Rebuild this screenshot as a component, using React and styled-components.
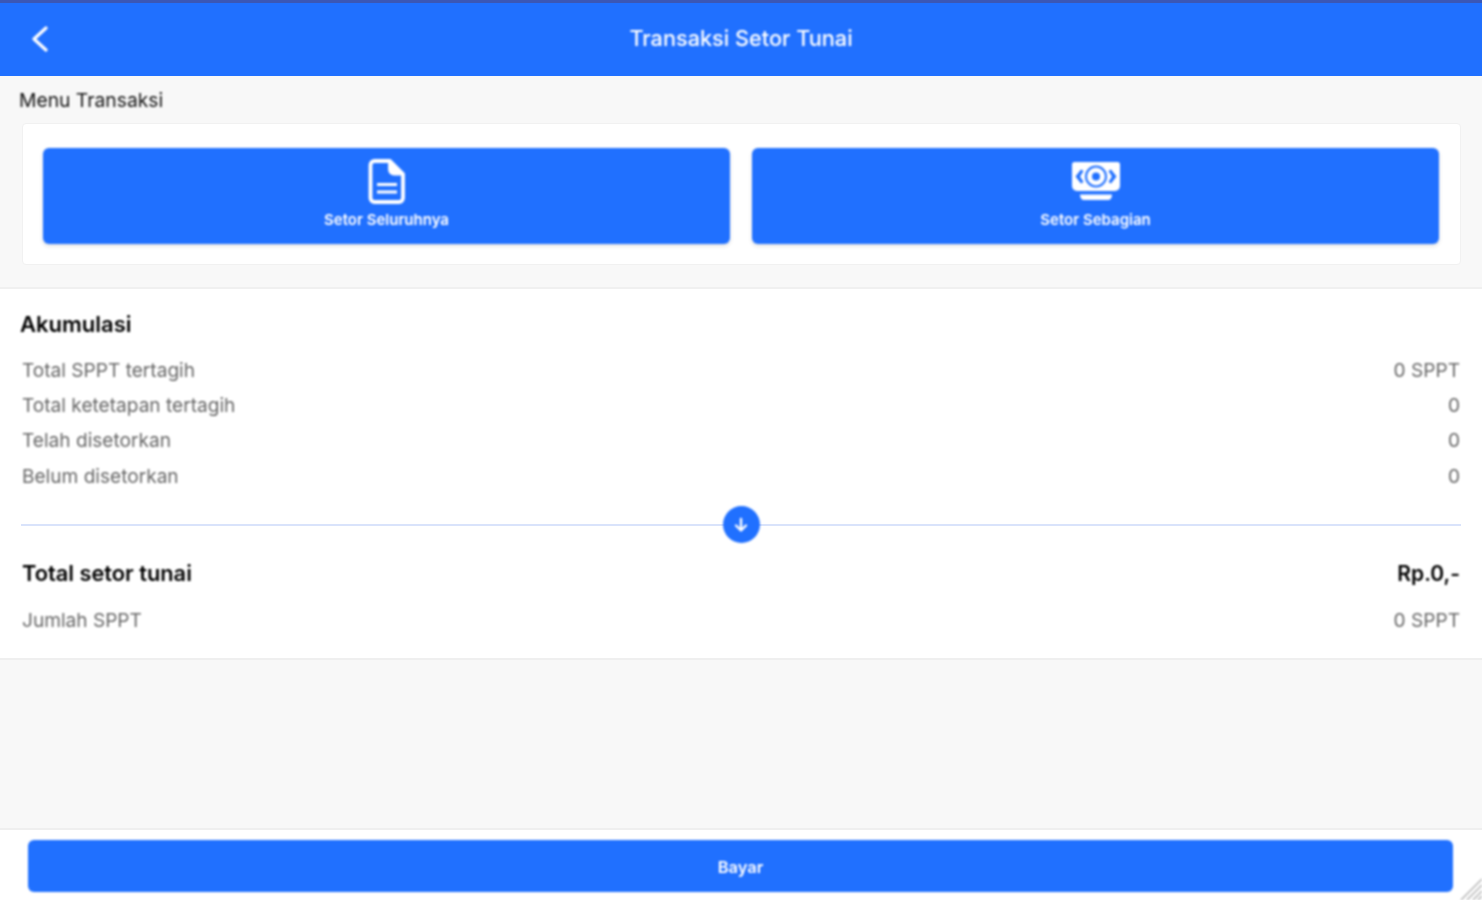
import React from "react";
import styled, { createGlobalStyle, css } from "styled-components";

const GlobalStyle = createGlobalStyle`
  html, body {
    margin: 0;
    padding: 0;
    background: #f8f8f8;
    font-family: Inter, "Noto Sans", sans-serif;
  }
  * { box-sizing: border-box; }
`;

// the reference is a scaled-up capture, so its text and buttons are a bit soft
const soft = css`
  filter: blur(0.8px);
`;

const Page = styled.div`
  position: relative;
  width: 1482px;
  height: 900px;
  overflow: hidden;
  display: flex;
  flex-direction: column;
  background: #f8f8f8;
`;

const Header = styled.header`
  height: 76px;
  flex: none;
  display: flex;
  align-items: center;
  justify-content: center;
  position: relative;
  background: #2070ff;
  border-top: 3px solid #3b57b5;
  color: #fff;
`;

const BackButton = styled.button`
  ${soft}
  position: absolute;
  left: 26px;
  top: 18px;
  width: 28px;
  height: 32px;
  padding: 0;
  border: 0;
  background: transparent;
  color: #fff;
`;

const Title = styled.h1`
  ${soft}
  margin: 0;
  font-size: 21.700px;
  font-weight: 500;
  line-height: 70px;
  align-self: flex-start;
`;

const MenuSection = styled.section`
  height: 213px;
  flex: none;
  padding: 12px 21px 0 22px;
  border-bottom: 2px solid #f0f0f0;
`;

const MenuLabel = styled.div`
  ${soft}
  margin-left: -3px;
  height: 35px;
  font-size: 19.300px;
  line-height: 24px;
  color: #111;
`;

const MenuCard = styled.div`
  height: 142px;
  padding: 24px 21px 24px 20px;
  display: grid;
  grid-template-columns: 1fr 1fr;
  gap: 22px;
  background: #fff;
  border: 1px solid #f1f1f1;
  border-radius: 4px;
`;

const MenuButton = styled.button`
  ${soft}
  height: 96px;
  padding: 11px 0 0;
  border: 0;
  border-radius: 6px;
  display: flex;
  flex-direction: column;
  align-items: center;
  background: #2070ff;
  color: #fff;
  font-family: inherit;
  font-size: 15px;
  font-weight: 600;
  box-shadow: 0 2px 4px rgba(0, 0, 0, 0.12);
`;

const MenuIcon = styled.svg`
  width: 50px;
  height: 46px;
  margin-bottom: 5px;
  display: block;
`;

const MenuText = styled.span`
  line-height: 20px;
`;

const Summary = styled.section`
  height: 371px;
  flex: none;
  padding: 20px 22px 0;
  background: #fff;
  border-bottom: 2px solid #efefef;
`;

const SummaryTitle = styled.h2`
  ${soft}
  margin: 0 0 13px -2px;
  font-size: 22px;
  line-height: 30px;
  font-weight: 600;
  color: #000;
`;

const Row = styled.div`
  ${soft}
  height: 35.300px;
  display: flex;
  align-items: center;
  justify-content: space-between;
  font-size: 19.100px;
  color: #666;
`;

const Divider = styled.div`
  position: relative;
  height: 2px;
  margin: 31px -1px 31px -1px;
  background: #d9e3fb;
`;

const ArrowBadge = styled.div`
  ${soft}
  position: absolute;
  left: 701.500px;
  top: -18px;
  width: 37px;
  height: 37px;
  display: flex;
  align-items: center;
  justify-content: center;
  border-radius: 50%;
  background: #2070ff;
  color: #fff;
`;

const TotalRow = styled.div`
  ${soft}
  height: 32px;
  margin-bottom: 13px;
  display: flex;
  align-items: center;
  justify-content: space-between;
  font-size: 21.800px;
  font-weight: 600;
  color: #000;
`;

const Amount = styled.span`
  font-size: 21px;
`;

const Spacer = styled.div`
  flex: 1;
`;

const Footer = styled.footer`
  height: 72px;
  flex: none;
  padding: 10px 29px 0 28px;
  background: #fff;
  border-top: 2px solid #efefef;
`;

const PayButton = styled.button`
  ${soft}
  width: 100%;
  height: 52px;
  padding: 2px 0 0;
  border: 0;
  border-radius: 6px;
  background: #2070ff;
  color: #fff;
  font-family: inherit;
  font-size: 16.500px;
  font-weight: 600;
`;

const ResizeGrip = styled.svg`
  ${soft}
  position: absolute;
  right: 0;
  bottom: 0;
  width: 22px;
  height: 22px;
`;

const rows = [
  ["Total SPPT tertagih", "0 SPPT"],
  ["Total ketetapan tertagih", "0"],
  ["Telah disetorkan", "0"],
  ["Belum disetorkan", "0"],
];

const DocumentIcon = () => (
  <MenuIcon viewBox="0 0 50 46" fill="none" stroke="currentColor" strokeWidth="3.800" strokeLinejoin="round">
    <path d="M8.500 6a4 4 0 0 1 4-4H28l13 13v24a4 4 0 0 1-4 4H12.500a4 4 0 0 1-4-4z" />
    <path d="M28 2.500v8a4 4 0 0 0 4 4h8.500" fill="currentColor" />
    <path d="M15 25.500h20M15 33h20" strokeWidth="3" />
  </MenuIcon>
);

const MoneyIcon = () => (
  <MenuIcon viewBox="0 0 50 46">
    <path
      fill="currentColor"
      fillRule="evenodd"
      d="M3.500 3h43A2.500 2.500 0 0 1 49 5.500V27a5 5 0 0 1-5 5H6a5 5 0 0 1-5-5V5.500A2.500 2.500 0 0 1 3.500 3zM10 10.500 4.500 17.500 10 24.500l2.500-1.500-3.500-5.500 3.500-5.500zM40 10.500l-2.500 1.500 3.500 5.500-3.500 5.500 2.500 1.500 5.500-7zM25 6.500a11 11 0 1 0 0 22 11 11 0 0 0 0-22z"
    />
    <path
      fill="currentColor"
      fillRule="evenodd"
      d="M25 8.500a9 9 0 1 1 0 18 9 9 0 0 1 0-18zm0 5a4 4 0 1 0 0 8 4 4 0 0 0 0-8z"
    />
    <path fill="currentColor" d="M9 35.500h32c0 3.500-1.500 5.500-4 5.500H13c-2.500 0-4-2-4-5.500z" />
  </MenuIcon>
);

export default function App() {
  return (
    <Page>
      <GlobalStyle />
      <Header>
        <BackButton aria-label="Kembali">
          <svg width="28" height="32" viewBox="0 0 28 32" fill="none" stroke="currentColor" strokeWidth="3.200" strokeLinecap="round" strokeLinejoin="round">
            <path d="M20 7 8 18l12 11" />
          </svg>
        </BackButton>
        <Title>Transaksi Setor Tunai</Title>
      </Header>
      <MenuSection>
        <MenuLabel>Menu Transaksi</MenuLabel>
        <MenuCard>
          <MenuButton>
            <DocumentIcon />
            <MenuText>Setor Seluruhnya</MenuText>
          </MenuButton>
          <MenuButton>
            <MoneyIcon />
            <MenuText>Setor Sebagian</MenuText>
          </MenuButton>
        </MenuCard>
      </MenuSection>
      <Summary>
        <SummaryTitle>Akumulasi</SummaryTitle>
        {rows.map(([label, value]) => (
          <Row key={label}>
            <span>{label}</span>
            <span>{value}</span>
          </Row>
        ))}
        <Divider>
          <ArrowBadge>
            <svg width="18" height="18" viewBox="0 0 18 18" fill="none" stroke="currentColor" strokeWidth="2.400" strokeLinecap="round" strokeLinejoin="round">
              <path d="M9 3v11M4 9.500 9 14.500 14 9.500" />
            </svg>
          </ArrowBadge>
        </Divider>
        <TotalRow>
          <span>Total setor tunai</span>
          <Amount>Rp.0,-</Amount>
        </TotalRow>
        <Row>
          <span>Jumlah SPPT</span>
          <span>0 SPPT</span>
        </Row>
      </Summary>
      <Spacer />
      <Footer>
        <PayButton>Bayar</PayButton>
      </Footer>
      <ResizeGrip viewBox="0 0 22 22" stroke="#b4b4b4" strokeWidth="1.500">
        <path d="M1 22 22 1M7 22 22 7M13 22l9-9M18 22l4-4" />
      </ResizeGrip>
    </Page>
  );
}
